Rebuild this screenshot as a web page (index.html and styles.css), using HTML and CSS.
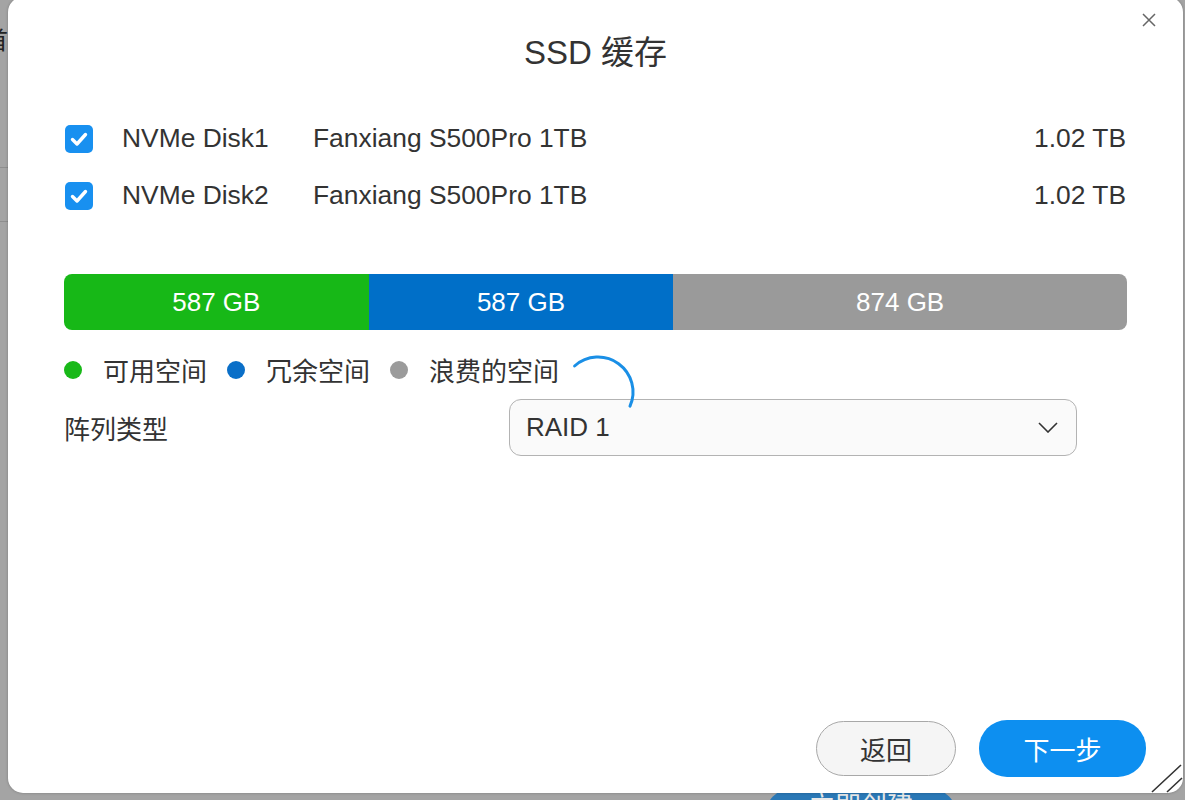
FILE: index.html
```html
<!DOCTYPE html>
<html lang="zh-CN">
<head>
<meta charset="utf-8">
<title>SSD 缓存</title>
<link rel="stylesheet" href="styles.css">
</head>
<body>
<div class="page">
  <div class="page-side">
    <div class="side-item side-first"><span class="side-text">首</span></div>
    <div class="side-item side-line"></div>
  </div>
  <div class="page-foot">
    <div class="create-btn">立即创建</div>
  </div>
</div>

<div class="modal">
  <button class="close" aria-label="关闭">
    <svg width="14" height="14" viewBox="0 0 14 14"><path d="M1 1L13 13M13 1L1 13" stroke="#666" stroke-width="1.5" fill="none"/></svg>
  </button>
  <h1 class="title">SSD 缓存</h1>
  <div class="body">
    <div class="disks">
      <div class="disk">
        <span class="check"><svg width="28" height="28" viewBox="0 0 28 28"><path d="M7.5 14.5L12 19L20.5 9.5" stroke="#fff" stroke-width="3.4" fill="none" stroke-linecap="round" stroke-linejoin="round"/></svg></span>
        <span class="disk-name">NVMe Disk1</span>
        <span class="disk-model">Fanxiang S500Pro 1TB</span>
        <span class="disk-size">1.02 TB</span>
      </div>
      <div class="disk">
        <span class="check"><svg width="28" height="28" viewBox="0 0 28 28"><path d="M7.5 14.5L12 19L20.5 9.5" stroke="#fff" stroke-width="3.4" fill="none" stroke-linecap="round" stroke-linejoin="round"/></svg></span>
        <span class="disk-name">NVMe Disk2</span>
        <span class="disk-model">Fanxiang S500Pro 1TB</span>
        <span class="disk-size">1.02 TB</span>
      </div>
    </div>

    <div class="bar">
      <div class="seg seg-green" style="width:28.66%">587 GB</div>
      <div class="seg seg-blue" style="width:28.66%">587 GB</div>
      <div class="seg seg-gray" style="width:42.68%">874 GB</div>
    </div>

    <div class="legend">
      <span class="dot dot-green"></span><span class="legend-text">可用空间</span>
      <span class="dot dot-blue"></span><span class="legend-text">冗余空间</span>
      <span class="dot dot-gray"></span><span class="legend-text">浪费的空间</span>
    </div>

    <div class="field">
      <span class="field-label">阵列类型</span>
      <div class="select">
        <span class="select-value">RAID 1</span>
        <svg class="chev" width="20" height="11" viewBox="0 0 20 11"><path d="M1 1L10 10L19 1" stroke="#333" stroke-width="1.6" fill="none"/></svg>
      </div>
    </div>
  </div>

  <svg class="spinner" width="80" height="80" viewBox="0 0 80 80"><path d="M16.6 14A35 35 0 0 1 72 54.2" stroke="#1a8fe6" stroke-width="3" fill="none" stroke-linecap="round"/></svg>

  <div class="footer">
    <button class="btn btn-back">返回</button>
    <button class="btn btn-next">下一步</button>
  </div>

  <svg class="resize" width="34" height="30" viewBox="0 0 34 30"><path d="M3 29L32 2M18 29L33 15" stroke="#333" stroke-width="1.6" fill="none"/></svg>
</div>
</body>
</html>
```

FILE: styles.css
```css
* { box-sizing: border-box; }
html, body {
  margin: 0;
  padding: 0;
  width: 1185px;
  height: 800px;
  overflow: hidden;
  font-family: "Liberation Sans", "Noto Sans CJK SC", sans-serif;
  color: #333;
}
.page {
  width: 1185px;
  height: 800px;
  background: #a4a4a4;
  display: flex;
  flex-direction: column;
  overflow: hidden;
}
.page-side {
  width: 8px;
  overflow: hidden;
  display: flex;
  flex-direction: column;
}
.side-item {
  height: 54px;
  border-bottom: 1px solid #8e8e8e;
}
.side-first {
  height: 168px;
  padding-top: 26px;
}
.side-text {
  display: block;
  margin-left: -16px;
  font-size: 24px;
  line-height: 30px;
  color: #222;
}
.side-line { height: 54px; }
.page-foot {
  margin-top: auto;
  height: 12px;
  display: flex;
  overflow: hidden;
}
.create-btn {
  margin-left: 765px;
  width: 192px;
  height: 56px;
  border-radius: 28px;
  background: #2a78b6;
  color: #e8e8e8;
  font-size: 26px;
  line-height: 24px;
  padding-top: 6px;
  text-align: center;
  flex-shrink: 0;
}

.modal {
  position: absolute;
  left: 8px;
  top: -3px;
  width: 1175px;
  height: 796px;
  background: #fff;
  border-radius: 15px;
  display: flex;
  flex-direction: column;
  box-shadow: 0 0 3px rgba(0,0,0,0.25);
}
.close {
  position: absolute;
  right: 27px;
  top: 16px;
  width: 14px;
  height: 14px;
  padding: 0;
  border: 0;
  background: none;
  display: flex;
}
.title {
  margin: 35px 0 0;
  font-size: 33px;
  font-weight: normal;
  line-height: 42px;
  text-align: center;
  color: #333;
}
.body {
  padding: 0 56px;
  display: flex;
  flex-direction: column;
}
.disks {
  margin-top: 36px;
  display: flex;
  flex-direction: column;
}
.disk {
  height: 57px;
  display: flex;
  align-items: center;
  font-size: 26.4px;
}
.check {
  width: 28px;
  height: 28px;
  margin-left: 1px;
  margin-right: 29px;
  border-radius: 5px;
  background: #1890f0;
  display: flex;
}
.disk-name { width: 191px; }
.disk-model { flex: 1; }
.disk-size { margin-right: 1px; }

.bar {
  margin-top: 50px;
  height: 56px;
  border-radius: 8px;
  overflow: hidden;
  display: flex;
  flex-shrink: 0;
}
.seg {
  display: flex;
  align-items: center;
  justify-content: center;
  color: #fff;
  font-size: 26px;
}
.seg-green { background: #17b817; }
.seg-blue { background: #006fc8; }
.seg-gray { background: #9a9a9a; }

.legend {
  margin-top: 21px;
  height: 36px;
  display: flex;
  align-items: center;
  font-size: 26px;
}
.dot {
  width: 18px;
  height: 18px;
  border-radius: 50%;
  margin-right: 21px;
  margin-top: 1px;
}
.legend-text { margin-right: 20px; }
.dot-green { background: #19b919; }
.dot-blue { background: #0a6fc8; }
.dot-gray { background: #9b9b9b; }

.field {
  margin-top: 12px;
  display: flex;
  align-items: center;
  font-size: 26px;
}
.field-label { width: 445px; }
.select {
  width: 568px;
  height: 57px;
  border: 1.5px solid #b3b3b3;
  border-radius: 12px;
  background: #fafafa;
  display: flex;
  align-items: center;
  justify-content: space-between;
  padding: 0 18px 0 16px;
}
.select-value { color: #333; }

.spinner {
  position: absolute;
  left: 550px;
  top: 355px;
}

.footer {
  margin-top: auto;
  padding: 0 37px 16px 0;
  display: flex;
  justify-content: flex-end;
  align-items: center;
  gap: 23px;
}
.btn {
  height: 56px;
  border-radius: 28px;
  font-family: "Liberation Sans", "Noto Sans CJK SC", sans-serif;
  font-size: 26px;
  padding: 0;
}
.btn-back {
  width: 140px;
  height: 55px;
  background: #f5f5f5;
  border: 1.5px solid #a8a8a8;
  color: #333;
}
.btn-next {
  width: 167px;
  height: 57px;
  background: #0d8ff0;
  border: 0;
  color: #fff;
}
.resize {
  position: absolute;
  right: 0;
  bottom: 0;
}
```
